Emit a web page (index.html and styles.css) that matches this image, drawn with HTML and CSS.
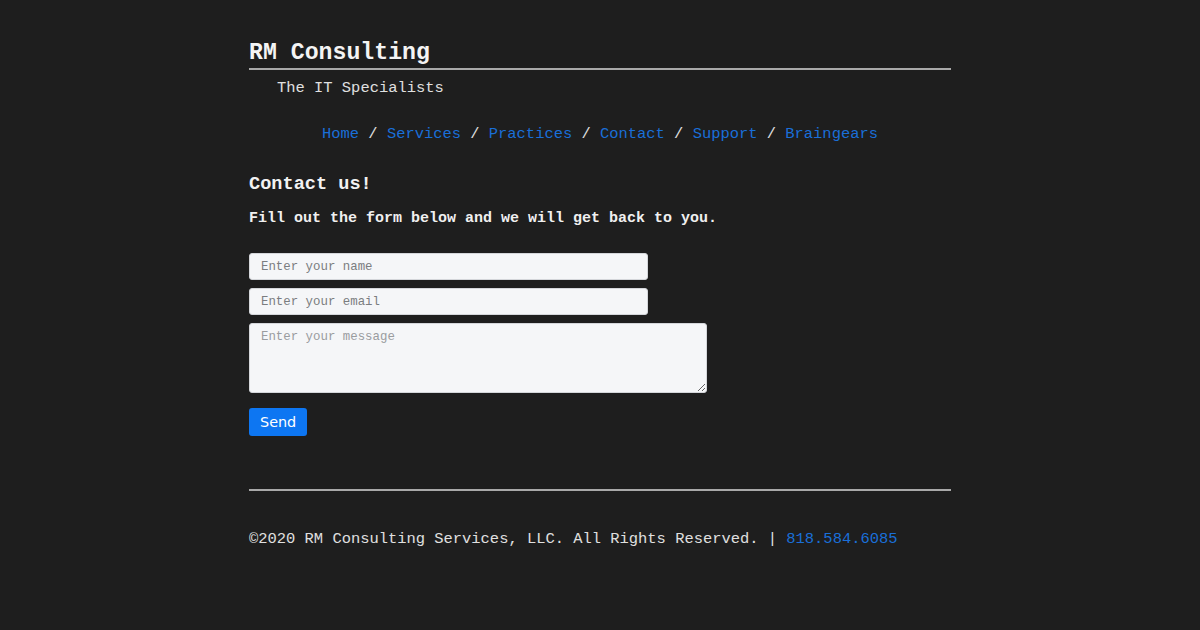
FILE: index.html
```html
<!DOCTYPE html>
<html lang="en">
<head>
<meta charset="utf-8">
<title>RM Consulting</title>
<link rel="stylesheet" href="styles.css">
</head>
<body>
<div class="page">
  <header class="header">
    <h1 class="title">RM Consulting</h1>
    <p class="tagline">The IT Specialists</p>
    <nav class="nav">
      <a href="#">Home</a> / <a href="#">Services</a> / <a href="#">Practices</a> / <a href="#">Contact</a> / <a href="#">Support</a> / <a href="#">Braingears</a>
    </nav>
  </header>
  <main class="main">
    <h2 class="heading">Contact us!</h2>
    <p class="lead">Fill out the form below and we will get back to you.</p>
    <form class="form">
      <input class="field field-short" type="text" placeholder="Enter your name">
      <input class="field field-short" type="email" placeholder="Enter your email">
      <textarea class="field field-area" placeholder="Enter your message"></textarea>
      <button class="send" type="button">Send</button>
    </form>
  </main>
  <footer class="footer">
    <p class="copy">©2020 RM Consulting Services, LLC. All Rights Reserved. | <a href="#">818.584.6085</a></p>
  </footer>
</div>
</body>
</html>
```

FILE: styles.css
```css
html, body {
  margin: 0;
  padding: 0;
  background: #1e1e1e;
}
body {
  font-family: "Liberation Mono", "DejaVu Sans Mono", monospace;
  color: #e6e6e6;
  font-size: 15.45px;
}
.page {
  width: 702px;
  margin: 0 auto;
  padding-top: 38px;
}
a {
  color: #1a6fd8;
  text-decoration: none;
}
.title {
  margin: 0;
  font-size: 23.2px;
  line-height: 30px;
  font-weight: bold;
  color: #f4f4f4;
  border-bottom: 2px solid #a9a9a9;
}
.tagline {
  margin: 8px 0 0 28px;
  line-height: 20px;
  color: #e0e0e0;
}
.nav {
  margin-top: 26px;
  text-align: center;
  line-height: 20px;
  color: #e0e0e0;
}
.main {
  padding-top: 29px;
}
.heading {
  margin: 0;
  font-size: 18.6px;
  line-height: 24px;
  font-weight: bold;
  color: #f2f2f2;
}
.lead {
  margin: 12px 0 0;
  font-size: 15px;
  line-height: 20px;
  font-weight: bold;
  color: #f0f0f0;
}
.form {
  margin-top: 24px;
  display: flex;
  flex-direction: column;
  align-items: flex-start;
  gap: 8px;
}
.field {
  box-sizing: border-box;
  margin: 0;
  background: #f5f6f8;
  border: 1px solid #d4d6da;
  border-radius: 3px;
  font-family: "Liberation Mono", "DejaVu Sans Mono", monospace;
  font-size: 12.4px;
  color: #333;
  padding: 0 11px;
  outline: none;
}
.field::placeholder {
  color: #7b7d80;
}
.field-short {
  width: 399px;
  height: 27px;
}
.field-area {
  width: 458px;
  height: 70px;
  padding-top: 6px;
  resize: vertical;
}
.field-area::placeholder {
  color: #9a9c9f;
}
.send {
  margin-top: 7px;
  height: 28px;
  padding: 0 11px;
  background: #0d76f2;
  color: #ffffff;
  border: none;
  border-radius: 3px;
  font-family: "DejaVu Sans", "Noto Sans", sans-serif;
  font-size: 14.4px;
}
.footer {
  margin-top: 53px;
  border-top: 2px solid #a9a9a9;
}
.copy {
  margin: 38px 0 0;
  line-height: 20px;
  color: #e0e0e0;
}
```
